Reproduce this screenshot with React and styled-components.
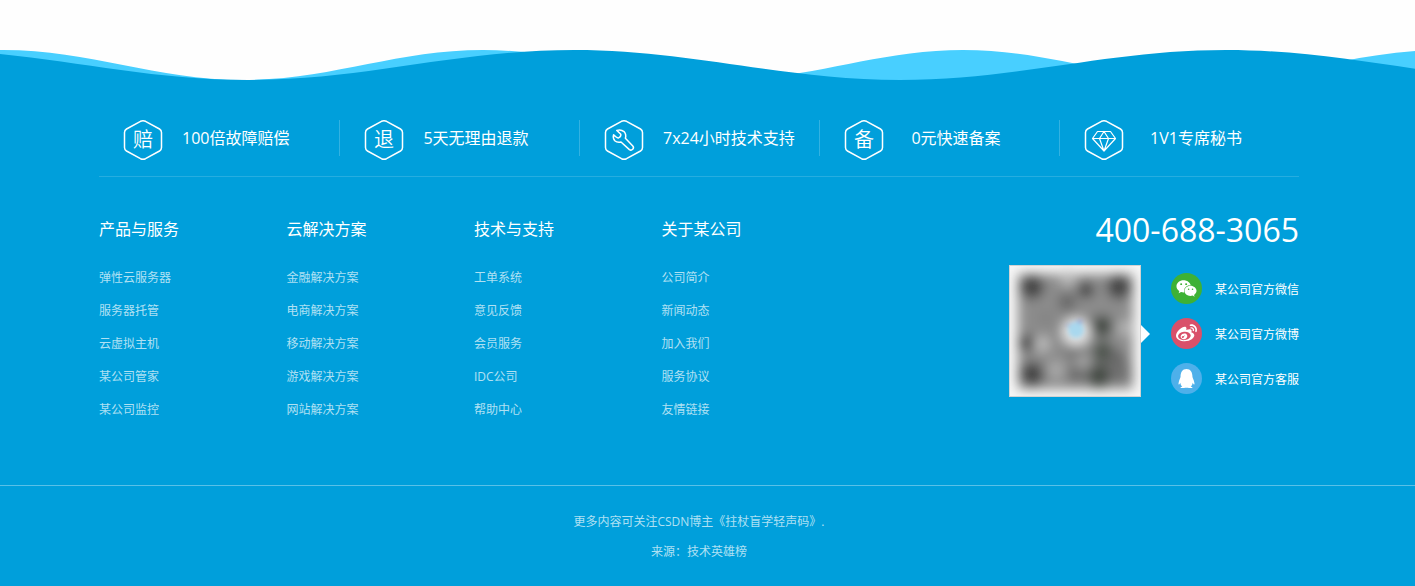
import React from "react";
import styled, { createGlobalStyle } from "styled-components";
import { FaQq, FaWeibo, FaWeixin } from "react-icons/fa";

const GlobalStyle = createGlobalStyle`
  * {
    box-sizing: border-box;
  }
  body {
    margin: 0;
    background: #fefefe;
    font-family: "Open Sans", "Noto Sans CJK SC", sans-serif;
    font-size: 12px;
    color: #fff;
  }
  h3, p, ul {
    margin: 0;
    padding: 0;
    font-weight: normal;
  }
  ul {
    list-style: none;
  }
`;

const Footer = styled("footer")`
  padding-top: 50px;
`;

const Waves = styled("svg")`
  display: block;
  width: 100%;
  height: 30px;
`;

const Body = styled("div")`
  background: #009fdb;
`;

const Inner = styled("div")`
  padding: 0 116px 0 99px;
`;

const Features = styled("ul")`
  display: grid;
  grid-template-columns: repeat(5, 1fr);
  padding: 40px 0 16px;
  border-bottom: 1px solid rgba(255, 255, 255, 0.15);
`;

const Feature = styled("li")`
  display: flex;
  gap: 19px;
  height: 36px;
  padding-left: 24px;
  margin-bottom: 4px;

  &:not(:first-child) {
    border-left: 1px solid rgba(255, 255, 255, 0.2);
  }
`;

const FeatureIcon = styled("svg")`
  flex: none;
  width: 40px;
  height: 40px;
  fill: none;
  stroke: #fff;
  stroke-width: 1.5;
  stroke-linejoin: round;
  stroke-linecap: round;

  text {
    fill: #fff;
    stroke: none;
    font-size: 20px;
    font-weight: 350;
    text-anchor: middle;
  }
`;

const FeatureName = styled("span")`
  min-width: 106px;
  font-size: 16px;
  line-height: 36px;
  text-align: center;
  white-space: nowrap;
`;

const Main = styled("div")`
  display: flex;
  justify-content: space-between;
  padding: 32px 0 65px;
`;

const Columns = styled("nav")`
  display: grid;
  grid-template-columns: repeat(4, 1fr);
  width: 750px;
`;

const Title = styled("h3")`
  margin-bottom: 19px;
  font-size: 16px;
  line-height: 40px;
`;

const Links = styled("ul")`
  display: flex;
  flex-direction: column;
  gap: 13px;
`;

const Link = styled("a")`
  display: block;
  line-height: 20px;
  color: rgba(255, 255, 255, 0.7);
  text-decoration: none;
  &:hover {
    color: #fff;
  }
`;

const Contact = styled("div")`
  display: flex;
  flex-direction: column;
  align-items: flex-end;
`;

const Phone = styled("p")`
  margin-bottom: 14px;
  font-size: 32px;
  line-height: 42px;
`;

const Follow = styled("div")`
  display: flex;
`;

const CodeFrame = styled("div")`
  position: relative;
  width: 132px;
  height: 132px;
  margin-right: 30px;
  border: 1px solid #d2d2d2;
  background: #f7f7f7;

  &::after {
    content: "";
    position: absolute;
    top: 59px;
    left: 131px;
    border: 9px solid transparent;
    border-left-color: #fff;
    border-right-width: 0;
  }
`;

const Code = styled("svg")`
  display: block;
  width: 130px;
  height: 130px;
`;

const Accounts = styled("ul")`
  display: flex;
  flex-direction: column;
  gap: 14px;
  padding-top: 8px;
`;

const Account = styled("li")`
  display: flex;
  align-items: center;
  gap: 13px;
  height: 31px;
`;

const Badge = styled("span")`
  display: flex;
  align-items: center;
  justify-content: center;
  width: 31px;
  height: 31px;
  border-radius: 50%;
  font-size: ${({ $size }) => $size}px;
  background: ${({ color }) => color};
`;

const Bottom = styled("div")`
  padding: 21px 17px 20px 0;
  border-top: 1px solid rgba(255, 255, 255, 0.35);
  line-height: 30px;
  text-align: center;
  color: rgba(255, 255, 255, 0.7);
`;

const columns = [
  {
    title: "产品与服务",
    links: ["弹性云服务器", "服务器托管", "云虚拟主机", "某公司管家", "某公司监控"],
  },
  {
    title: "云解决方案",
    links: [
      "金融解决方案",
      "电商解决方案",
      "移动解决方案",
      "游戏解决方案",
      "网站解决方案",
    ],
  },
  {
    title: "技术与支持",
    links: ["工单系统", "意见反馈", "会员服务", "IDC公司", "帮助中心"],
  },
  {
    title: "关于某公司",
    links: ["公司简介", "新闻动态", "加入我们", "服务协议", "友情链接"],
  },
];

const Wrench = () => (
  <path d="M12.800 10.400L16.800 14.200Q17.200 17 14.600 17.900Q13 18.200 9.600 14.700Q8.600 18 10.800 20.700Q13.200 22.900 17 22L25.400 29.600Q27.200 30.800 28.700 29.300Q30.200 27.600 28.800 26L21.400 18.300Q22.600 14.500 20 11.600Q17 9 12.800 10.400z" />
);

const Diamond = () => (
  <path
    strokeWidth="1.2"
    d="M13.500 11.500h13l5 7L20 31 8.500 18.500zM8.500 18.500h23M15.500 18.500L20 31l4.500-12.500M15.500 18.500l4.500-7 4.500 7"
  />
);

const features = [
  { name: "100倍故障赔偿", icon: <text x="20" y="27">赔</text> },
  { name: "5天无理由退款", icon: <text x="20" y="27">退</text> },
  { name: "7x24小时技术支持", icon: <Wrench /> },
  { name: "0元快速备案", icon: <text x="20" y="27">备</text> },
  { name: "1V1专席秘书", icon: <Diamond /> },
];

const accounts = [
  { name: "某公司官方微信", color: "#3eb135", icon: <FaWeixin />, size: 21 },
  { name: "某公司官方微博", color: "#d9506a", icon: <FaWeibo />, size: 21 },
  { name: "某公司官方客服", color: "#4eb0ea", icon: <FaQq />, size: 19 },
];

// x, y, radius, shade
const blots = [
  [22, 21, 12, "#454545"],
  [109, 21, 12, "#454545"],
  [22, 108, 12, "#454545"],
  [76, 24, 8, "#3c3c3c"],
  [57, 36, 9, "#666"],
  [92, 60, 11, "#454c45"],
  [17, 77, 8, "#444"],
  [93, 86, 11, "#4c534c"],
  [89, 110, 12, "#454c45"],
  [106, 94, 10, "#666"],
  [64, 86, 9, "#777"],
  [66, 108, 9, "#6c6c6c"],
  [36, 52, 9, "#858585"],
  [110, 106, 11, "#707070"],
  [58, 12, 8, "#bbb"],
  [32, 78, 8, "#bbb"],
  [46, 104, 9, "#a8a8a8"],
  [72, 96, 6, "#aaa"],
  [114, 62, 8, "#b0b0b0"],
];

const wave = (crest, period) => {
  const half = period / 2;
  const bend = half * 0.364;
  let d = `M${crest} 0`;
  for (let x = crest; x < 1415; x += period) {
    const low = x + half;
    const next = x + period;
    d += `C${x + bend} 0 ${low - bend} 30 ${low} 30`;
    d += `C${low + bend} 30 ${next - bend} 0 ${next} 0`;
  }
  return `${d}V31H${crest}z`;
};

const App = () => (
  <Footer>
    <GlobalStyle />
    <Waves viewBox="0 0 1415 30" preserveAspectRatio="none" aria-hidden="true">
      <path fill="#48cfff" d={wave(-477, 480)} />
      <path fill="#009fdb" d={wave(-78, 652)} />
    </Waves>
    <Body>
      <Inner>
        <Features>
          {features.map(({ name, icon }) => (
            <Feature key={name}>
              <FeatureIcon viewBox="0 0 40 40" aria-hidden="true">
                <path d="M17.500 1.300Q20 .2 22.500 1.300L36.500 9Q38.500 10.200 38.500 12.500V27.500Q38.500 29.800 36.500 31L22.500 38.700Q20 39.800 17.500 38.700L3.500 31Q1.500 29.800 1.500 27.500V12.500Q1.500 10.200 3.500 9z" />
                {icon}
              </FeatureIcon>
              <FeatureName>{name}</FeatureName>
            </Feature>
          ))}
        </Features>
        <Main>
          <Columns>
            {columns.map(({ title, links }) => (
              <div key={title}>
                <Title>{title}</Title>
                <Links>
                  {links.map((link) => (
                    <li key={link}>
                      <Link href="#">{link}</Link>
                    </li>
                  ))}
                </Links>
              </div>
            ))}
          </Columns>
          <Contact>
            <Phone>400-688-3065</Phone>
            <Follow>
              <CodeFrame>
                <Code viewBox="0 0 130 130" aria-hidden="true">
                  <filter id="soft" x="-20%" y="-20%" width="140%" height="140%">
                    <feGaussianBlur stdDeviation="6" />
                  </filter>
                  <filter id="glow" x="-50%" y="-50%" width="200%" height="200%">
                    <feGaussianBlur stdDeviation="2" />
                  </filter>
                  <g filter="url(#soft)">
                    <rect x="8" y="8" width="115" height="115" fill="#8c8c8c" />
                    {blots.map(([x, y, r, fill]) => (
                      <circle key={`${x}-${y}`} cx={x} cy={y} r={r} fill={fill} />
                    ))}
                    <circle cx="66" cy="66" r="14" fill="#e4e4e4" />
                  </g>
                  <g filter="url(#glow)">
                    <path d="M54 60L72 53V60z" fill="#8f9ad0" />
                    <circle cx="66" cy="64" r="8" fill="#a9d8ee" />
                  </g>
                </Code>
              </CodeFrame>
              <Accounts>
                {accounts.map(({ name, color, icon, size }) => (
                  <Account key={name}>
                    <Badge color={color} $size={size}>
                      {icon}
                    </Badge>
                    {name}
                  </Account>
                ))}
              </Accounts>
            </Follow>
          </Contact>
        </Main>
      </Inner>
      <Bottom>
        <p>更多内容可关注CSDN博主《拄杖盲学轻声码》.</p>
        <p>来源：技术英雄榜</p>
      </Bottom>
    </Body>
  </Footer>
);

export default App;
